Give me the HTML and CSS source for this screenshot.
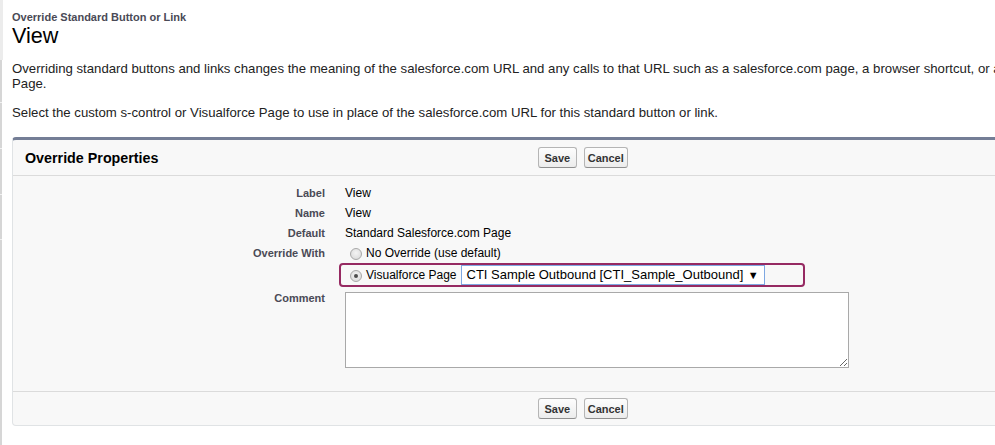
FILE: index.html
```html
<!DOCTYPE html>
<html lang="en">
<head>
<meta charset="utf-8">
<title>Override Standard Button or Link: View</title>
<link rel="stylesheet" href="styles.css">
</head>
<body>
<div class="page">
  <div class="edge">
    <div class="edge-top"></div>
    <div class="edge-seg s1"></div>
    <div class="edge-seg s2"></div>
    <div class="edge-seg s3"></div>
    <div class="edge-seg s4"></div>
    <div class="edge-seg s5"></div>
  </div>
  <div class="main">
    <div class="page-type">Override Standard Button or Link</div>
    <h1 class="page-title">View</h1>
    <p class="intro">Overriding standard buttons and links changes the meaning of the salesforce.com URL and any calls to that URL such as a salesforce.com page, a browser shortcut, or a Visualforce Page.</p>
    <p class="intro second">Select the custom s-control or Visualforce Page to use in place of the salesforce.com URL for this standard button or link.</p>

    <div class="panel">
      <div class="panel-head">
        <h2 class="panel-title">Override Properties</h2>
        <div class="buttons">
          <button class="btn btn-save" type="button">Save</button>
          <button class="btn" type="button">Cancel</button>
        </div>
      </div>
      <div class="panel-body">
        <div class="row">
          <div class="label">Label</div>
          <div class="value">View</div>
        </div>
        <div class="row">
          <div class="label">Name</div>
          <div class="value">View</div>
        </div>
        <div class="row">
          <div class="label">Default</div>
          <div class="value">Standard Salesforce.com Page</div>
        </div>
        <div class="row">
          <div class="label">Override With</div>
          <div class="value">
            <label class="choice"><span class="radio"></span>No Override (use default)</label>
          </div>
        </div>
        <div class="row">
          <div class="label"></div>
          <div class="value">
            <div class="highlight">
              <label class="choice"><span class="radio checked"></span>Visualforce Page</label>
              <div class="select"><span class="select-text">CTI Sample Outbound [CTI_Sample_Outbound]</span><span class="select-arrow">&#9660;</span></div>
            </div>
          </div>
        </div>
        <div class="row row-comment">
          <div class="label">Comment</div>
          <div class="value"><textarea class="comment" aria-label="Comment"></textarea></div>
        </div>
      </div>
      <div class="panel-foot">
        <div class="foot-spacer"></div>
        <div class="buttons">
          <button class="btn btn-save" type="button">Save</button>
          <button class="btn" type="button">Cancel</button>
        </div>
      </div>
    </div>
  </div>
</div>
</body>
</html>
```

FILE: styles.css
```css
html, body {
  margin: 0;
  padding: 0;
  overflow: hidden;
  background: #fff;
}

body {
  font-family: "Liberation Sans", Arial, sans-serif;
  font-size: 12px;
  color: #222;
  width: 995px;
  height: 445px;
}

.page {
  display: flex;
  align-items: flex-start;
  height: 445px;
}

.edge {
  width: 3px;
  flex: none;
  display: flex;
  flex-direction: column;
  height: 445px;
}

.edge-top {
  height: 60px;
  background: #ececec;
}

.edge-seg {
  width: 2px;
  background: #d6d6d6;
  border-bottom: 1px solid #f2f2f2;
}

.s1 { height: 42px; }
.s2 { height: 45px; }
.s3 { height: 45px; }
.s4 { height: 44px; }
.s5 { flex: 1; border-bottom: 0; }

.main {
  margin-left: 9px;
  width: 1140px;
  flex: none;
}

.page-type {
  margin-top: 10px;
  font-size: 11px;
  line-height: 14px;
  font-weight: bold;
  color: #4a4a56;
}

.page-title {
  margin: 0;
  font-size: 21.6px;
  line-height: 24px;
  font-weight: normal;
  color: #000;
}

.intro {
  margin: 13px 0 0;
  width: 1070px;
  font-size: 13.2px;
  line-height: 15px;
  color: #222;
}

.intro.second {
  margin-top: 14px;
}

.panel {
  margin-top: 17px;
  background: #f8f8f8;
  border: 1px solid #e0e3e5;
  border-top: 3px solid #747e96;
  border-radius: 4px;
}

.panel-head {
  display: grid;
  grid-template-columns: 525px auto;
  align-items: center;
  padding: 7px 0;
  border-bottom: 1px solid #dbdbdb;
}

.panel-title {
  margin: 0;
  padding-left: 12px;
  font-size: 14.3px;
  line-height: 18px;
  font-weight: bold;
  color: #000;
}

.buttons {
  display: flex;
  gap: 7px;
}

.btn {
  box-sizing: border-box;
  height: 21px;
  padding: 0 3px;
  font-family: "Liberation Sans", Arial, sans-serif;
  font-size: 11px;
  font-weight: bold;
  color: #333;
  background: linear-gradient(#fdfdfd, #ececec);
  border: 1px solid #b5b5b5;
  border-bottom-color: #8f8f8f;
  border-radius: 3px;
}

.btn-save {
  padding: 0 5.5px;
}

.panel-body {
  padding: 7px 0 23px;
}

.row {
  display: grid;
  grid-template-columns: 312px auto;
  column-gap: 20px;
  align-items: start;
}

.label {
  text-align: right;
  font-size: 11px;
  font-weight: bold;
  color: #4a4a56;
  line-height: 20px;
  min-height: 1px;
}

.value {
  font-size: 12px;
  line-height: 20px;
  color: #000;
}

.choice {
  display: flex;
  align-items: center;
  height: 20px;
  white-space: nowrap;
}

.radio {
  flex: none;
  width: 10px;
  height: 10px;
  margin: 1px 4px 0 5px;
  border: 1px solid #a8a8a8;
  border-radius: 50%;
  background: radial-gradient(circle at 50% 40%, #f4f4f4, #d6d6d6);
  position: relative;
}

.radio.checked::after {
  content: "";
  position: absolute;
  left: 3px;
  top: 3px;
  width: 4px;
  height: 4px;
  border-radius: 50%;
  background: #4d4d4d;
}

.highlight {
  display: flex;
  align-items: center;
  width: 458px;
  height: 20px;
  margin-left: -6px;
  padding-left: 4px;
  border: 2px solid #962a62;
  border-radius: 4px;
}

.select {
  display: flex;
  align-items: center;
  justify-content: space-between;
  box-sizing: border-box;
  width: 304px;
  height: 20px;
  margin-left: 4px;
  padding: 0 5px 0 5px;
  background: #fff;
  border: 1px solid #7ea8e2;
  font-size: 13px;
  color: #000;
  white-space: nowrap;
  overflow: hidden;
}

.select-text {
  flex: none;
}

.select-arrow {
  flex: none;
  font-size: 11px;
  color: #000;
}

.row-comment {
  margin-top: 4px;
}

.row-comment .label {
  line-height: 14px;
}

.comment {
  display: block;
  box-sizing: border-box;
  width: 504px;
  height: 76px;
  margin: 1px 0 0;
  border: 1px solid #a9a9a9;
  background: #fff;
  font-family: "Liberation Sans", Arial, sans-serif;
  font-size: 12px;
}

.panel-foot {
  display: grid;
  grid-template-columns: 525px auto;
  padding: 6px 0;
  border-top: 1px solid #dbdbdb;
}
```
